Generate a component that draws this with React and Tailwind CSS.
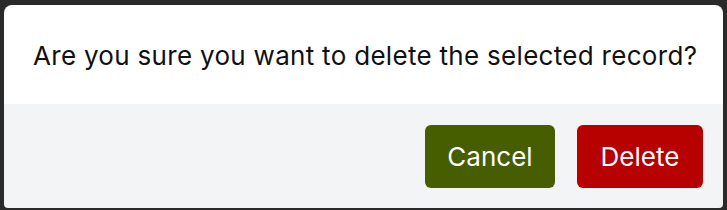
export default function App() {
  return (
    <div className="h-[210px] w-[727px] bg-[#2a2a2a] pt-[5px] pl-[4px] font-['Inter',sans-serif]">
      <div className="w-[719px] h-[203px] rounded-t-[8px] rounded-b-[4px] overflow-hidden flex flex-col">
        <div className="h-[99px] bg-white flex items-center pl-[29px] pt-[1px]">
          <p className="text-[26px] text-[#111] tracking-[0.3px]">
            Are you sure you want to delete the selected record?
          </p>
        </div>
        <div className="flex-1 bg-[#f3f4f6] flex justify-end items-start pt-[21px] pr-[20px] gap-[22px]">
          <button className="h-[63px] w-[130px] rounded-[6px] bg-[#465d00] text-white text-[26px]">
            Cancel
          </button>
          <button className="h-[63px] w-[126px] rounded-[6px] bg-[#b70000] text-white text-[26px]">
            Delete
          </button>
        </div>
      </div>
    </div>
  )
}
